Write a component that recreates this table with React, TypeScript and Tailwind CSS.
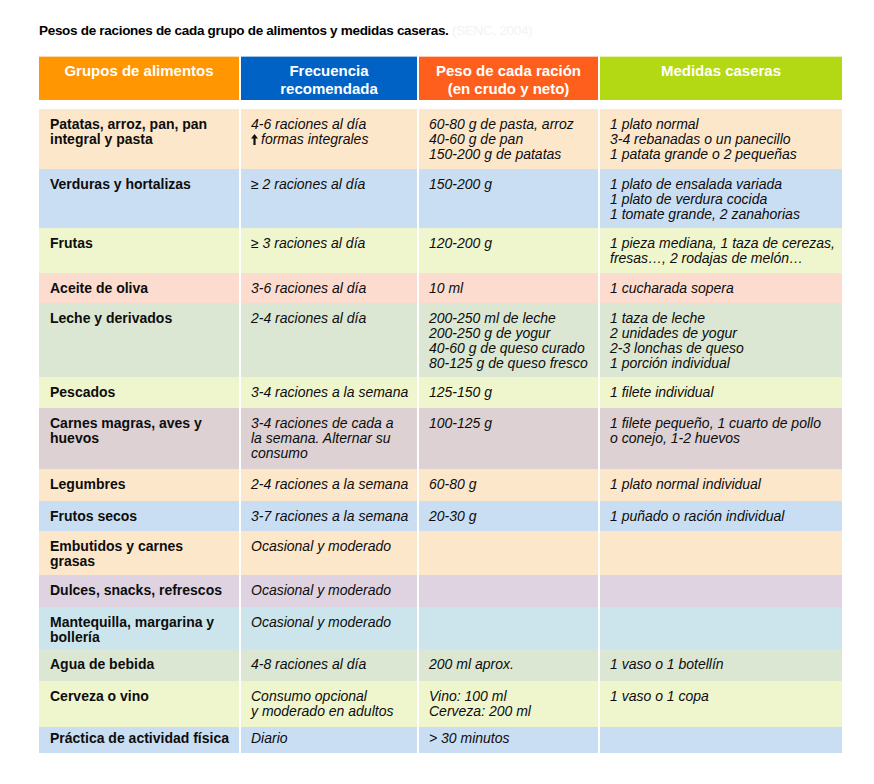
const COLS = "grid grid-cols-[200px_176px_179px_242px] gap-x-[2px]";

type Row = {
  bg: string;
  h: string;
  grupo: string[];
  frecuencia: React.ReactNode[];
  peso: string[];
  medidas: string[];
};

// flecha gruesa hacia arriba del PDF original
function UpArrow() {
  return (
    <svg width="7" height="11" viewBox="0 0 7 11" className="inline-block align-[-1px] mr-[3px]">
      <path d="M3.5 0 L7 4.5 L4.6 4.5 L4.6 11 L2.4 11 L2.4 4.5 L0 4.5 Z" fill="#111" />
    </svg>
  );
}

const ROWS: Row[] = [
  {
    bg: "bg-[#fde7cb]",
    h: "h-[60px]",
    grupo: ["Patatas, arroz, pan, pan", "integral y pasta"],
    frecuencia: [
      "4-6 raciones al día",
      <>
        <UpArrow />
        formas integrales
      </>,
    ],
    peso: ["60-80 g de pasta, arroz", "40-60 g de pan", "150-200 g de patatas"],
    medidas: ["1 plato normal", "3-4 rebanadas o un panecillo", "1 patata grande o 2 pequeñas"],
  },
  {
    bg: "bg-[#cadef3]",
    h: "h-[59px]",
    grupo: ["Verduras y hortalizas"],
    frecuencia: ["≥ 2 raciones al día"],
    peso: ["150-200 g"],
    medidas: ["1 plato de ensalada variada", "1 plato de verdura cocida", "1 tomate grande, 2 zanahorias"],
  },
  {
    bg: "bg-[#eff6ce]",
    h: "h-[45px]",
    grupo: ["Frutas"],
    frecuencia: ["≥ 3 raciones al día"],
    peso: ["120-200 g"],
    medidas: ["1 pieza mediana, 1 taza de cerezas,", "fresas…, 2 rodajas de melón…"],
  },
  {
    bg: "bg-[#fddcd0]",
    h: "h-[30px]",
    grupo: ["Aceite de oliva"],
    frecuencia: ["3-6 raciones al día"],
    peso: ["10 ml"],
    medidas: ["1 cucharada sopera"],
  },
  {
    bg: "bg-[#dce7d3]",
    h: "h-[74px]",
    grupo: ["Leche y derivados"],
    frecuencia: ["2-4 raciones al día"],
    peso: ["200-250 ml de leche", "200-250 g de yogur", "40-60 g de queso curado", "80-125 g de queso fresco"],
    medidas: ["1 taza de leche", "2 unidades de yogur", "2-3 lonchas de queso", "1 porción individual"],
  },
  {
    bg: "bg-[#eff6ce]",
    h: "h-[31px]",
    grupo: ["Pescados"],
    frecuencia: ["3-4 raciones a la semana"],
    peso: ["125-150 g"],
    medidas: ["1 filete individual"],
  },
  {
    bg: "bg-[#ddd1d3]",
    h: "h-[61px]",
    grupo: ["Carnes magras, aves y", "huevos"],
    frecuencia: ["3-4 raciones de cada a", "la semana. Alternar su", "consumo"],
    peso: ["100-125 g"],
    medidas: ["1 filete pequeño, 1 cuarto de pollo", "o conejo, 1-2 huevos"],
  },
  {
    bg: "bg-[#fde7cb]",
    h: "h-[32px]",
    grupo: ["Legumbres"],
    frecuencia: ["2-4 raciones a la semana"],
    peso: ["60-80 g"],
    medidas: ["1 plato normal individual"],
  },
  {
    bg: "bg-[#cadef3]",
    h: "h-[30px]",
    grupo: ["Frutos secos"],
    frecuencia: ["3-7 raciones a la semana"],
    peso: ["20-30 g"],
    medidas: ["1 puñado o ración individual"],
  },
  {
    bg: "bg-[#fde7cb]",
    h: "h-[44px]",
    grupo: ["Embutidos y carnes", "grasas"],
    frecuencia: ["Ocasional y moderado"],
    peso: [],
    medidas: [],
  },
  {
    bg: "bg-[#dfd3e2]",
    h: "h-[32px]",
    grupo: ["Dulces, snacks, refrescos"],
    frecuencia: ["Ocasional y moderado"],
    peso: [],
    medidas: [],
  },
  {
    bg: "bg-[#cce5ec]",
    h: "h-[42px]",
    grupo: ["Mantequilla, margarina y", "bollería"],
    frecuencia: ["Ocasional y moderado"],
    peso: [],
    medidas: [],
  },
  {
    bg: "bg-[#dce7d3]",
    h: "h-[32px]",
    grupo: ["Agua de bebida"],
    frecuencia: ["4-8 raciones al día"],
    peso: ["200 ml aprox."],
    medidas: ["1 vaso o 1 botellín"],
  },
  {
    bg: "bg-[#eff6ce]",
    h: "h-[46px]",
    grupo: ["Cerveza o vino"],
    frecuencia: ["Consumo opcional", "y moderado en adultos"],
    peso: ["Vino: 100 ml", "Cerveza: 200 ml"],
    medidas: ["1 vaso o 1 copa"],
  },
  {
    bg: "bg-[#cadef3]",
    h: "h-[26px]",
    grupo: ["Práctica de actividad física"],
    frecuencia: ["Diario"],
    peso: ["> 30 minutos"],
    medidas: [],
  },
];

function Cell({ lines, bg, bold, last }: { lines: React.ReactNode[]; bg: string; bold?: boolean; last?: boolean }) {
  return (
    <div
      className={`${bg} pl-[10px] ${last ? "pt-[4px]" : "pt-[8px]"} leading-[15px] whitespace-nowrap ${
        bold ? "font-bold pl-[11px]" : "italic"
      }`}
    >
      {lines.map((l, i) => (
        <div key={i}>{l}</div>
      ))}
    </div>
  );
}

export default function App() {
  return (
    <div className="min-h-[784px] bg-white pl-[39px] pt-[22px] text-[14px] text-[#0d0d0d] font-['Liberation_Sans',Arial,sans-serif]">
      <h1 className="text-[13.5px] tracking-[-0.3px] font-bold leading-[18px] text-black">
        Pesos de raciones de cada grupo de alimentos y medidas caseras.{" "}
        <span className="text-[#f3f3f3] font-normal">(SENC, 2004)</span>
      </h1>

      <div className="mt-[16px] w-[803px]">
        {/* Cabecera */}
        <div className={`${COLS} h-[44px] text-[15px] font-bold leading-[18px] text-white text-center`}>
          <div className="bg-[#ff9602] pt-[5px] border-t border-[#ffd9a6]">Grupos de alimentos</div>
          <div className="bg-[#0062c4] pt-[5px] border-t border-[#9ec3ea]">
            Frecuencia
            <br />
            recomendada
          </div>
          <div className="bg-[#ff5f1c] pt-[5px] border-t border-[#ffc7ae]">
            Peso de cada ración
            <br />
            (en crudo y neto)
          </div>
          <div className="bg-[#b3d814] pt-[5px] border-t border-[#e3f2a6]">Medidas caseras</div>
        </div>

        <div className="mt-[9px]">
          {ROWS.map((r, i) => {
            const last = i === ROWS.length - 1;
            return (
              <div key={i} className={`${COLS} ${r.h}`}>
                <Cell lines={r.grupo} bg={r.bg} bold last={last} />
                <Cell lines={r.frecuencia} bg={r.bg} last={last} />
                <Cell lines={r.peso} bg={r.bg} last={last} />
                <Cell lines={r.medidas} bg={r.bg} last={last} />
              </div>
            );
          })}
        </div>
      </div>
    </div>
  );
}
